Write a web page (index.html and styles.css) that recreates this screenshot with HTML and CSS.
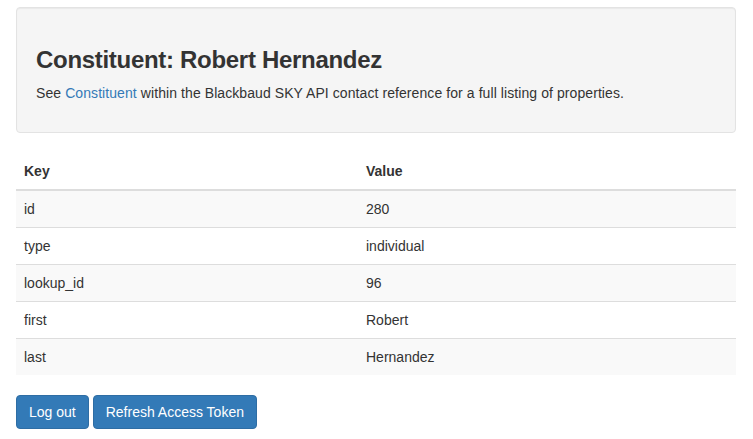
FILE: index.html
```html
<!DOCTYPE html>
<html>
<head>
<meta charset="utf-8">
<link rel="stylesheet" href="styles.css">
</head>
<body>
<div class="container">
  <div class="well">
    <h3 class="title">Constituent: Robert Hernandez</h3>
    <p class="lead-text">See <a href="#" class="link">Constituent</a> within the Blackbaud SKY API contact reference for a full listing of properties.</p>
  </div>
  <table class="table">
    <thead>
      <tr><th class="col-key">Key</th><th>Value</th></tr>
    </thead>
    <tbody>
      <tr><td>id</td><td>280</td></tr>
      <tr><td>type</td><td>individual</td></tr>
      <tr><td>lookup_id</td><td>96</td></tr>
      <tr><td>first</td><td>Robert</td></tr>
      <tr><td>last</td><td>Hernandez</td></tr>
    </tbody>
  </table>
  <div class="actions">
    <a href="#" class="btn">Log out</a>
    <a href="#" class="btn">Refresh Access Token</a>
  </div>
</div>
</body>
</html>
```

FILE: styles.css
```css
* { box-sizing: border-box; }
html, body {
  margin: 0;
  padding: 0;
  background: #fff;
}
body {
  font-family: "Liberation Sans", Arial, sans-serif;
  font-size: 14px;
  line-height: 20px;
  color: #333;
}
.container {
  padding: 7px 17px 0 16px;
}
.well {
  background: #f5f5f5;
  border: 1px solid #e3e3e3;
  border-radius: 4px;
  padding: 19px;
  margin-bottom: 20px;
  box-shadow: inset 0 1px 1px rgba(0,0,0,.05);
}
.title {
  font-size: 24px;
  font-weight: bold;
  line-height: 1.1;
  letter-spacing: -0.3px;
  margin: 20px 0 10px;
  color: #333;
}
.lead-text {
  margin: 0 0 10px;
  letter-spacing: 0.08px;
}
.link {
  color: #337ab7;
  text-decoration: none;
}
.table {
  width: 100%;
  border-collapse: collapse;
  border-spacing: 0;
  margin-bottom: 20px;
}
.table th, .table td {
  text-align: left;
  padding: 8px;
  line-height: 20px;
  vertical-align: top;
}
.table th {
  font-weight: bold;
  border-bottom: 2px solid #ddd;
}
.table td {
  border-top: 1px solid #ddd;
}
.table tbody tr:first-child td {
  border-top: 0;
}
.table tbody tr:nth-child(odd) {
  background: #f9f9f9;
}
.col-key {
  width: 342px;
}
.actions {
  display: flex;
  gap: 4px;
}
.btn {
  display: inline-block;
  padding: 6px 12px;
  font-size: 14px;
  line-height: 20px;
  color: #fff;
  background: #337ab7;
  border: 1px solid #2e6da4;
  border-radius: 4px;
  text-decoration: none;
}
```
